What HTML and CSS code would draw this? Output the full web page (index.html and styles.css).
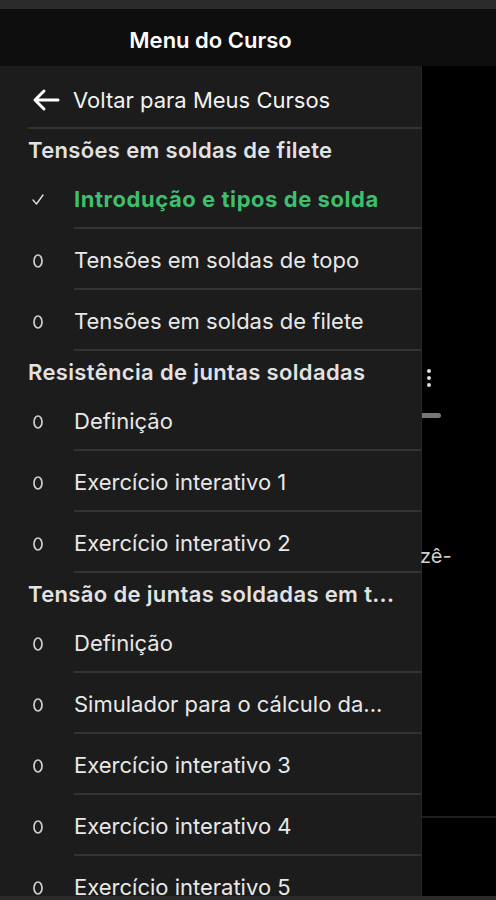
FILE: index.html
```html
<!DOCTYPE html>
<html lang="pt">
<head>
  <meta charset="UTF-8">
  <meta name="viewport" content="width=device-width, initial-scale=1.0">
  <title>Menu do Curso</title>
  <link rel="stylesheet" href="styles.css">
</head>
<body>
<div class="top-strip"></div>
<header class="header">
  <h1>Menu do Curso</h1>
</header>
<div class="layout">
  <nav class="drawer">
    <div class="back-row">
      <svg class="back-icon" width="28" height="24" viewBox="0 0 28 24">
        <path d="M26 12H3M12 3L3 12l9 9" fill="none" stroke="#fff" stroke-width="3" stroke-linecap="round" stroke-linejoin="round"/>
      </svg>
      <span>Voltar para Meus Cursos</span>
    </div>

    <div class="section-title">Tensões em soldas de filete</div>
    <div class="item done">
      <span class="item-icon">
        <svg width="12" height="11" viewBox="0 0 12 11"><path d="M1 6l3.5 4L11 1" fill="none" stroke="#ddd" stroke-width="1.4" stroke-linecap="round" stroke-linejoin="round"/></svg>
      </span>
      <span class="item-text">Introdução e tipos de solda</span>
    </div>
    <div class="item">
      <span class="item-icon"><svg width="12" height="16" viewBox="0 0 12 16"><ellipse cx="6" cy="8" rx="4" ry="6" fill="none" stroke="#d0d0d0" stroke-width="1.7"/></svg></span>
      <span class="item-text">Tensões em soldas de topo</span>
    </div>
    <div class="item">
      <span class="item-icon"><svg width="12" height="16" viewBox="0 0 12 16"><ellipse cx="6" cy="8" rx="4" ry="6" fill="none" stroke="#d0d0d0" stroke-width="1.7"/></svg></span>
      <span class="item-text">Tensões em soldas de filete</span>
    </div>

    <div class="section-title">Resistência de juntas soldadas</div>
    <div class="item">
      <span class="item-icon"><svg width="12" height="16" viewBox="0 0 12 16"><ellipse cx="6" cy="8" rx="4" ry="6" fill="none" stroke="#d0d0d0" stroke-width="1.7"/></svg></span>
      <span class="item-text">Definição</span>
    </div>
    <div class="item">
      <span class="item-icon"><svg width="12" height="16" viewBox="0 0 12 16"><ellipse cx="6" cy="8" rx="4" ry="6" fill="none" stroke="#d0d0d0" stroke-width="1.7"/></svg></span>
      <span class="item-text">Exercício interativo 1</span>
    </div>
    <div class="item">
      <span class="item-icon"><svg width="12" height="16" viewBox="0 0 12 16"><ellipse cx="6" cy="8" rx="4" ry="6" fill="none" stroke="#d0d0d0" stroke-width="1.7"/></svg></span>
      <span class="item-text">Exercício interativo 2</span>
    </div>

    <div class="section-title">Tensão de juntas soldadas em t...</div>
    <div class="item">
      <span class="item-icon"><svg width="12" height="16" viewBox="0 0 12 16"><ellipse cx="6" cy="8" rx="4" ry="6" fill="none" stroke="#d0d0d0" stroke-width="1.7"/></svg></span>
      <span class="item-text">Definição</span>
    </div>
    <div class="item">
      <span class="item-icon"><svg width="12" height="16" viewBox="0 0 12 16"><ellipse cx="6" cy="8" rx="4" ry="6" fill="none" stroke="#d0d0d0" stroke-width="1.7"/></svg></span>
      <span class="item-text">Simulador para o cálculo da...</span>
    </div>
    <div class="item">
      <span class="item-icon"><svg width="12" height="16" viewBox="0 0 12 16"><ellipse cx="6" cy="8" rx="4" ry="6" fill="none" stroke="#d0d0d0" stroke-width="1.7"/></svg></span>
      <span class="item-text">Exercício interativo 3</span>
    </div>
    <div class="item">
      <span class="item-icon"><svg width="12" height="16" viewBox="0 0 12 16"><ellipse cx="6" cy="8" rx="4" ry="6" fill="none" stroke="#d0d0d0" stroke-width="1.7"/></svg></span>
      <span class="item-text">Exercício interativo 4</span>
    </div>
    <div class="item">
      <span class="item-icon"><svg width="12" height="16" viewBox="0 0 12 16"><ellipse cx="6" cy="8" rx="4" ry="6" fill="none" stroke="#d0d0d0" stroke-width="1.7"/></svg></span>
      <span class="item-text">Exercício interativo 5</span>
    </div>
  </nav>

  <!-- parte da página atrás do menu -->
  <div class="page-behind">
    <div class="more-dots"><i></i><i></i><i></i></div>
    <div class="handle"></div>
    <div class="cut-text">zê-</div>
    <div class="page-line"></div>
  </div>
</div>
<div class="bottom-strip"></div>
</body>
</html>
```

FILE: styles.css
```css
body {
  margin: 0;
  background: #000;
  font-family: Inter, "Liberation Sans", Arial, sans-serif;
  color: #e8e8e8;
  height: 900px;
  overflow: hidden;
}
.top-strip {
  height: 9px;
  background: #2b2b2b;
}
.header {
  height: 57px;
  padding-top: 5px;
  box-sizing: border-box;
  background: #0e0e0e;
  display: flex;
  align-items: center;
}
.header h1 {
  width: 421px;
  margin: 0;
  text-align: center;
  font-size: 22px;
  font-weight: 600;
  color: #fff;
}
.layout {
  display: flex;
  height: 830px;
  overflow: hidden;
}
.drawer {
  width: 393px;
  flex-shrink: 0;
  padding-left: 28px;
  background: #1c1c1c;
  border-right: 1px solid #252525;
}
.back-row {
  height: 63px;
  display: flex;
  align-items: center;
  padding-top: 6px;
  box-sizing: border-box;
  border-bottom: 2px solid #333;
  font-size: 22px;
  color: #f2f2f2;
}
.back-icon {
  margin-left: 4px;
  margin-right: 13px;
}
.section-title {
  height: 39px;
  line-height: 42px;
  font-size: 22px;
  font-weight: 600;
  letter-spacing: 0.35px;
  color: #e2e2e2;
  white-space: nowrap;
}
.item {
  display: flex;
  height: 61px;
}
.item-icon {
  width: 46px;
  flex-shrink: 0;
  display: flex;
  align-items: center;
  padding-left: 4px;
  padding-top: 2px;
  box-sizing: border-box;
}
.item-text {
  flex: 1;
  line-height: 63px;
  height: 59px;
  border-bottom: 2px solid #333;
  font-size: 22px;
  color: #e8e8e8;
  white-space: nowrap;
}
.item.done .item-text {
  color: #3dbf6e;
  font-weight: 700;
  letter-spacing: 0.55px;
}
.page-behind {
  flex: 1;
  display: flex;
  flex-direction: column;
  align-items: flex-start;
}
.more-dots {
  margin-top: 303px;
  margin-left: 5px;
  display: flex;
  flex-direction: column;
  gap: 3px;
}
.more-dots i {
  width: 4px;
  height: 4px;
  border-radius: 50%;
  background: #ddd;
}
.handle {
  margin-top: 26px;
  width: 19px;
  height: 5px;
  border-radius: 0 3px 3px 0;
  background: #777;
}
.cut-text {
  margin-top: 126px;
  margin-left: -2px;
  font-size: 20px;
  color: #cfcfcf;
}
.page-line {
  margin-top: 248px;
  width: 100%;
  height: 2px;
  background: #1e1e1e;
}
.bottom-strip {
  height: 4px;
  background: #2b2b2b;
}
```
